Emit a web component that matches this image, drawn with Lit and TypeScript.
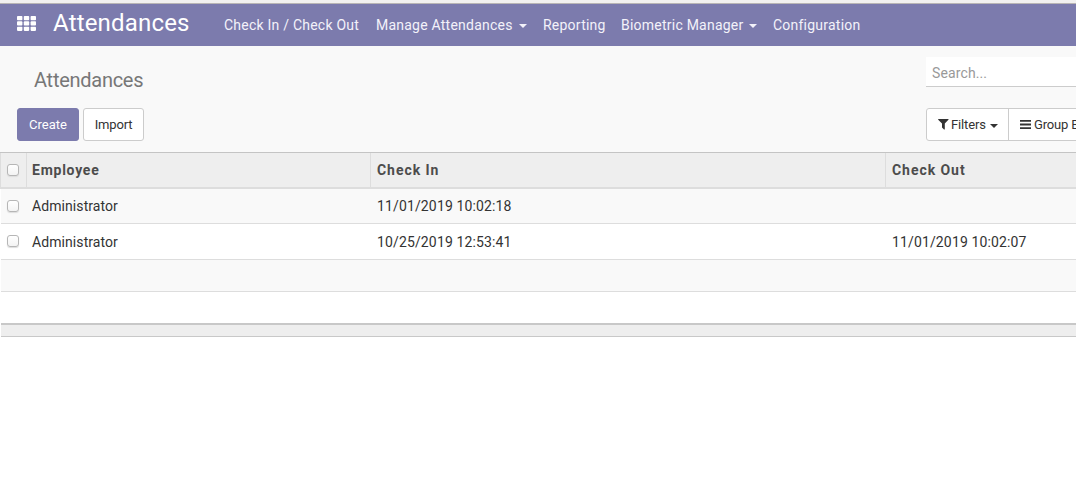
import { LitElement, html, css, svg } from "lit";
import { customElement } from "lit/decorators.js";

const caret = html`<span class="caret"></span>`;

@customElement("app-root")
export class AppRoot extends LitElement {
  static styles = css`
    :host { display: block; height: 482px; overflow: hidden; background: #fff; font-family: Roboto, "Liberation Sans", sans-serif; font-size: 14px; color: #333; }
    * { box-sizing: border-box; }
    svg { display: block; flex: none; }
    .strip { height: 4px; background: #f2f1f0; border-bottom: 1px solid #b9b5b5; }
    .nav { height: 42px; background: #7c7bad; color: #fff; display: flex; align-items: center; padding-left: 17px; white-space: nowrap; }
    .apps { margin-bottom: 3px; }
    .brand { font-size: 24px; line-height: 28px; width: 171px; margin: -4px 0 0 17px; letter-spacing: 0.18px; }
    .menu { display: flex; gap: 16px; font-size: 14px; letter-spacing: 0.23px; line-height: 20px; color: #f3f2fa; }
    .menu span { flex: none; }
    .item { display: flex; align-items: center; }
    .w1 { width: 136px; } .w2 { width: 151px; } .w3 { width: 62px; } .w4 { width: 136px; } .w5 { width: 90px; }
    .caret { width: 0; height: 0; border: 4px solid transparent; border-top-color: currentColor; border-bottom: 0; flex: none; }
    .item .caret { margin-left: auto; margin-top: 2px; }
    .panel { height: 106px; background: #f9f9f9; padding: 11px 0 0 17px; }
    .line { display: flex; justify-content: space-between; height: 51px; }
    .title { font-size: 20px; line-height: 26px; letter-spacing: -0.27px; color: #777; padding: 10px 0 0 17px; }
    .search { width: 150px; height: 30px; background: #fff; border-bottom: 1px solid #ccc; color: #999; padding: 6px 0 0 6px; line-height: 20px; letter-spacing: 0.12px; }
    .buttons { display: flex; gap: 4px; }
    .btn { height: 33px; border: 1px solid #ccc; border-radius: 3px; background: #fff; font-size: 13px; display: flex; align-items: center; justify-content: center; width: 61px; color: #333; white-space: nowrap; letter-spacing: -0.15px; }
    .primary { width: 62px; background: #7c7bad; border-color: #7c7bad; color: #fff; letter-spacing: 0; }
    .filters { width: 150px; display: flex; overflow: hidden; }
    .filters .btn { flex: none; justify-content: flex-start; padding-left: 11px; gap: 2px; }
    .filters .caret { margin: 2px 0 0 2px; }
    .first { width: 83px; border-radius: 3px 0 0 3px; }
    .second { width: 100px; border-radius: 0; margin-left: -1px; }
    .filters .second { gap: 3px; }
    .row { display: grid; grid-template-columns: 25px 345px 515px 1fr; border-bottom: 1px solid #ddd; height: 36px; margin-left: 1px; align-items: stretch; white-space: nowrap; letter-spacing: 0.14px; }
    .row > div { display: flex; align-items: center; padding-left: 6px; }
    .row > .name { letter-spacing: 0.08px; }
    .head { height: 37px; margin-left: 0; border-top: 1px solid #c4c4c4; border-bottom: 2px solid #ddd; background: #eee; font-weight: 700; color: #4c4c4c; grid-template-columns: 27px 344px 515px 1fr; letter-spacing: 0.95px; }
    .head > div { border-right: 1px solid #ddd; }
    .head > div:last-child { border-right: 0; }
    .head .first-cell { border-left: 1px solid #ddd; }
    .head > .name { padding-left: 5px; letter-spacing: 0.75px; }
    .first-row { height: 35px; }
    .odd { background: #f9f9f9; }
    .empty { height: 32px; }
    .last { border-bottom: 2px solid #c8c8c8; height: 33px; }
    .foot { height: 12px; margin-left: 1px; background: #eee; border-bottom: 1px solid #c8c8c8; }
    .box { width: 12px; height: 12px; border: 1px solid #b6b6b6; border-radius: 3px; background: linear-gradient(#fff, #f3f3f3); box-shadow: 0 1px 1px #ddd; }
    .up { margin-bottom: 2px; }
  `;

  render() {
    return html`
      <div class="strip"></div>
      <div class="nav">
        <svg class="apps" width="19" height="15" viewBox="0 0 19 15" fill="#fff">
          ${[0, 6.8, 13.6].map((x) => [0, 5.35, 10.7].map((y) => svg`<rect x=${x} y=${y} width="5.4" height="4.2" rx=".8"/>`))}
        </svg>
        <div class="brand">Attendances</div>
        <div class="menu">
          <div class="item w1"><span>Check In / Check Out</span></div>
          <div class="item w2"><span>Manage Attendances</span>${caret}</div>
          <div class="item w3"><span>Reporting</span></div>
          <div class="item w4"><span>Biometric Manager</span>${caret}</div>
          <div class="item w5"><span>Configuration</span></div>
        </div>
      </div>
      <div class="panel">
        <div class="line"><div class="title">Attendances</div><div class="search">Search...</div></div>
        <div class="line">
          <div class="buttons"><div class="btn primary">Create</div><div class="btn">Import</div></div>
          <div class="filters">
            <div class="btn first">
              <svg width="11" height="11" viewBox="0 0 11 11"><path d="M.5 0h9.8q.5.3.1.8L6.8 4.6v5.6q-.2.6-.8.3L4 8.6v-4L.2.8Q-.1.2.5 0z" fill="#333"/></svg>
              <span>Filters</span>${caret}
            </div>
            <div class="btn second">
              <svg width="11" height="9" viewBox="0 0 11 9"><path d="M0 0h11v1.8H0zM0 3.6h11v1.8H0zM0 7.2h11v1.8H0z" fill="#333"/></svg>
              <span>Group By</span>
            </div>
          </div>
        </div>
      </div>
      <div class="row head"><div class="first-cell"><i class="box"></i></div><div class="name">Employee</div><div>Check In</div><div>Check Out</div></div>
      <div class="row first-row odd"><div><i class="box"></i></div><div class="name">Administrator</div><div>11/01/2019 10:02:18</div><div></div></div>
      <div class="row"><div><i class="box up"></i></div><div class="name">Administrator</div><div>10/25/2019 12:53:41</div><div>11/01/2019 10:02:07</div></div>
      <div class="row empty odd"></div>
      <div class="row last"></div>
      <div class="foot"></div>
    `;
  }
}
